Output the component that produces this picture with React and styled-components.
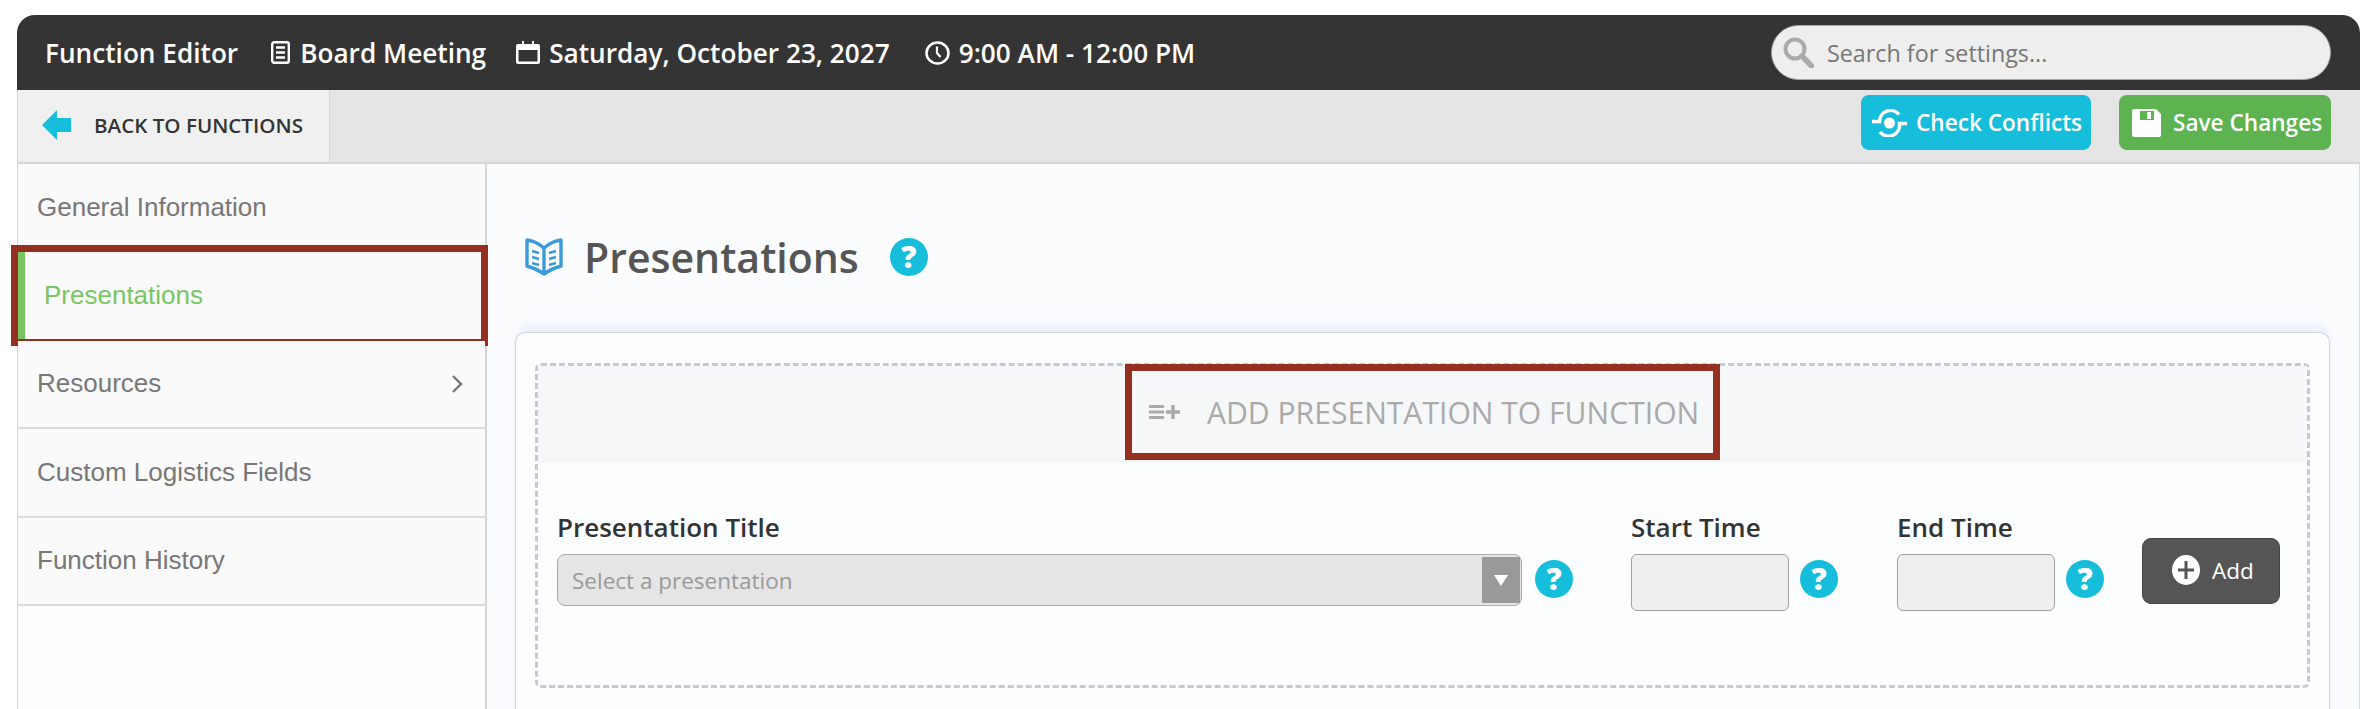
import React from 'react'
import styled, { createGlobalStyle } from 'styled-components'

const GlobalStyle = createGlobalStyle`
    html, body {
        margin: 0;
        height: 709px;
        overflow: hidden;
        background: #fff;
    }
    * { box-sizing: border-box; }
`

const Shell = styled.div`
    width: 2343px;
    height: 694px;
    margin: 15px 0 0 17px;
    font-family: "Open Sans", sans-serif;
`

// HEADER
const Header = styled.header`
    display: flex;
    align-items: center;
    height: 75px;
    padding: 0 29px 0 28px;
    background: #343434;
    border-radius: 18px 18px 0 0;
`
const HeaderItem = styled.div`
    display: flex;
    align-items: center;
    gap: ${p => p.$gap || 9}px;
    margin-right: ${p => p.$space || 0}px;
    color: #fff;
    font-size: 26.2px;
    font-weight: 600;
    white-space: nowrap;
`
const Search = styled.div`
    display: flex;
    align-items: center;
    gap: 13px;
    width: 560px;
    height: 55px;
    margin-left: auto;
    padding-left: 11px;
    background: #eee;
    border: 1px solid #a5a5a5;
    border-radius: 28px;
    color: #777;
    font-size: 23.3px;
`

// TOOLBAR
const Toolbar = styled.div`
    display: flex;
    align-items: stretch;
    height: 74px;
    padding-right: 29px;
    background: #e5e5e5;
    border-bottom: 2px solid #d6d6d6;
`
const BackLink = styled.div`
    display: flex;
    align-items: center;
    gap: 23px;
    width: 313px;
    padding: 0 0 2px 24px;
    background: #f0f0f0;
    border-left: 1px solid #d6d6d6;
    border-right: 1px solid #d6d6d6;
    color: #333;
    font-size: 20.6px;
    font-weight: 600;
`
const Actions = styled.div`
    display: flex;
    gap: 28px;
    margin-left: auto;
    padding-top: 5px;
`
const ActionButton = styled.div`
    display: flex;
    align-items: center;
    gap: ${p => p.$gap}px;
    width: ${p => p.$width}px;
    height: 55px;
    padding-left: ${p => p.$pad}px;
    background: ${p => p.$color};
    border-radius: 8px;
    color: #fff;
    font-size: 22.6px;
    font-weight: 600;
    white-space: nowrap;
`

// BODY
const Body = styled.div`
    display: flex;
    height: 545px;
`
const Sidebar = styled.nav`
    width: 470px;
    flex: none;
    background: #fcfdfe;
    border-left: 1px solid #d6d6d6;
    border-right: 2px solid #d6d6d6;
`
const NavItem = styled.div`
    position: relative;
    display: flex;
    align-items: center;
    justify-content: space-between;
    height: 88.4px;
    padding: 0 22px 0 19px;
    background: #fafafa;
    border-bottom: 2px solid #dcdcdc;
    border-left: ${p => p.$active ? '7px solid #77c663' : 'none'};
    color: ${p => p.$active ? '#77c663' : '#777'};
    font-family: "Liberation Sans", Arial, sans-serif;
    font-size: 26px;

    ${p => p.$active && `
        &::after {
            content: '';
            position: absolute;
            top: -7px;
            left: -14px;
            right: -3px;
            bottom: -7px;
            border: 7px solid #93301f;
        }
    `}
`
const Main = styled.main`
    flex: 1;
    padding: 74px 29px 0 28px;
    background: #fbfcfe;
    border-right: 1px solid #d6d9de;
`
const TitleRow = styled.div`
    display: flex;
    align-items: center;
    height: 38px;
    margin: 0 0 56px 10px;
`
const Title = styled.h1`
    margin: 0 31px 0 21px;
    color: #555;
    font-size: 41px;
    font-weight: 600;
    line-height: 38px;
`
const Help = styled.span`
    display: inline-flex;
    align-items: center;
    justify-content: center;
    flex: none;
    width: 38px;
    height: 38px;
    margin-top: ${p => p.$top || 0}px;
    border-radius: 50%;
    background: #17bedb;
    color: #fff;
    font-size: 30px;
    font-weight: 800;
    line-height: 1;
`
const Card = styled.section`
    position: relative;
    height: 400px;
    padding: 30px 19px 0;
    background: #fcfdff;
    border: 1px solid #cfd3d9;
    border-bottom: none;
    border-radius: 10px 10px 0 0;
    box-shadow: 0 -8px 12px -4px rgba(190, 215, 245, .45);
`
const DashedBox = styled.div`
    height: 325px;
    border: 3px dashed #c5c9d6;
    border-radius: 6px;
`
const Band = styled.div`
    display: flex;
    justify-content: center;
    height: 97px;
    background: #f6f7f8;
`
const BandTitle = styled.div`
    position: relative;
    display: flex;
    align-items: center;
    gap: 27px;
    width: 595px;
    height: 96px;
    margin-top: -2px;
    padding-left: 17px;
    border: 7px solid #93301f;
    color: #aaa;
    font-size: 30.1px;
    white-space: nowrap;
`
const FormRow = styled.div`
    display: flex;
    padding: 49px 0 0 19px;
`
const Field = styled.div`
    margin-right: ${p => p.$space}px;
`
const Label = styled.label`
    display: block;
    height: 30px;
    margin-bottom: 12px;
    color: #333;
    font-size: 26px;
    font-weight: 600;
    line-height: 30px;
`
const Controls = styled.div`
    display: flex;
    gap: ${p => p.$gap}px;
`
const Select = styled.div`
    display: flex;
    align-items: center;
    justify-content: space-between;
    width: 965px;
    height: 52px;
    padding: 2px 1px 2px 14px;
    background: #e5e5e5;
    border: 1px solid #aaa;
    border-radius: 8px;
    color: #999;
    font-size: 22.5px;
`
const SelectArrow = styled.span`
    display: flex;
    align-items: center;
    justify-content: center;
    align-self: stretch;
    width: 38px;
    background: #999;

    &::before {
        content: '';
        border-left: 7px solid transparent;
        border-right: 7px solid transparent;
        border-top: 11px solid #fff;
    }
`
const TimeInput = styled.div`
    width: 158px;
    height: 57px;
    background: #efefef;
    border: 1px solid #a0a0a0;
    border-radius: 6px;
`
const AddButton = styled.div`
    display: flex;
    align-items: center;
    gap: 12px;
    width: 138px;
    height: 66px;
    margin-top: 26px;
    padding: 0 0 2px 29px;
    background: #555;
    border: 1px solid #444;
    border-radius: 9px;
    color: #fff;
    font-size: 22.5px;
`

// ICONS
const DocIcon = () => (
    <svg width="19" height="23" viewBox="0 0 19 23">
        <rect x="1.2" y="1.2" width="16.6" height="20.6" rx="2" fill="none" stroke="#fff" strokeWidth="2.4" />
        <path d="M5 6.5h9M5 11.5h9M5 16.5h9" stroke="#fff" strokeWidth="2.4" />
    </svg>
)
const CalendarIcon = () => (
    <svg width="24" height="23" viewBox="0 0 24 23">
        <path d="M2 3h20a2 2 0 0 1 2 2v16a2 2 0 0 1-2 2H2a2 2 0 0 1-2-2V5a2 2 0 0 1 2-2zM2.500 9v11.500h19V9z" fill="#fff" fillRule="evenodd" />
        <path d="M6 0h2v4H6zM16 0h2v4h-2z" fill="#fff" />
    </svg>
)
const ClockIcon = () => (
    <svg width="25" height="24" viewBox="0 0 25 24">
        <ellipse cx="12.500" cy="12" rx="11" ry="10.500" fill="none" stroke="#fff" strokeWidth="2.500" />
        <path d="M12 5.500V12l3.500 4" fill="none" stroke="#fff" strokeWidth="2.200" />
    </svg>
)
const SearchIcon = () => (
    <svg width="31" height="31" viewBox="0 0 31 31">
        <circle cx="12" cy="12" r="9.500" fill="none" stroke="#aaa" strokeWidth="4" />
        <path d="M19 19l9.500 10" stroke="#aaa" strokeWidth="5.500" strokeLinecap="round" />
    </svg>
)
const BackArrow = () => (
    <svg width="29" height="30" viewBox="0 0 29 30">
        <path d="M0 15L15 0v8h14v14H15v8z" fill="#17bedb" />
    </svg>
)
const ConflictIcon = () => (
    <svg width="35" height="28" viewBox="0 0 35 28">
        <circle cx="17.500" cy="14" r="5.500" fill="#fff" />
        <path d="M0 12.500h7.500A11 11 0 0 1 27 5.500" fill="none" stroke="#fff" strokeWidth="3.500" />
        <path d="M35 14.500h-7.500A11 11 0 0 1 8 23" fill="none" stroke="#fff" strokeWidth="3.500" />
    </svg>
)
const SaveIcon = () => (
    <svg width="29" height="28" viewBox="0 0 29 28">
        <path d="M2 0h22l5 5v21a2 2 0 0 1-2 2H2a2 2 0 0 1-2-2V2a2 2 0 0 1 2-2z" fill="#fff" />
        <rect x="8" y="2" width="14" height="9" fill="#5cb350" />
        <rect x="15" y="3" width="4" height="7" fill="#fff" />
    </svg>
)
const BookIcon = () => (
    <svg width="38" height="38" viewBox="0 0 38 38">
        <path d="M19 10Q11 3 2 2v26q10 3 17 8 7-5 17-8V2q-9 1-17 8zM19 10v26" fill="none" stroke="#3b9bd9" strokeWidth="3.400" strokeLinejoin="round" />
        <path d="M7 13l7 2M7 19l7 2M7 25l7 2M31 13l-7 2M31 19l-7 2M31 25l-7 2" stroke="#3b9bd9" strokeWidth="2.500" />
    </svg>
)
const ListPlusIcon = () => (
    <svg width="31" height="16" viewBox="0 0 31 16">
        <path d="M0 2.500h14M0 8h14M0 13.500h14" stroke="#aaa" strokeWidth="3" strokeLinecap="round" />
        <path d="M24 1v14M17 8h14" stroke="#aaa" strokeWidth="3.500" />
    </svg>
)
const PlusCircle = () => (
    <svg width="28" height="30" viewBox="0 0 28 30">
        <ellipse cx="14" cy="15" rx="14" ry="15" fill="#fff" />
        <path d="M14 6v18M6 15h16" stroke="#555" strokeWidth="3" />
    </svg>
)
const Chevron = () => (
    <svg width="12" height="20" viewBox="0 0 12 20">
        <path d="M2 2l8 8-8 8" fill="none" stroke="#777" strokeWidth="2.400" />
    </svg>
)

const navItems = ['General Information', 'Presentations', 'Resources', 'Custom Logistics Fields', 'Function History']

const App = () => (
    <>
        <GlobalStyle />
        <Shell>
            <Header>
                <HeaderItem $space={33}>Function Editor</HeaderItem>
                <HeaderItem $space={30} $gap={10}><DocIcon />Board Meeting</HeaderItem>
                <HeaderItem $space={35}><CalendarIcon />Saturday, October 23, 2027</HeaderItem>
                <HeaderItem><ClockIcon />9:00 AM - 12:00 PM</HeaderItem>
                <Search><SearchIcon />Search for settings...</Search>
            </Header>
            <Toolbar>
                <BackLink><BackArrow />BACK TO FUNCTIONS</BackLink>
                <Actions>
                    <ActionButton $color="#17bedb" $width={230} $pad={11} $gap={9}><ConflictIcon />Check Conflicts</ActionButton>
                    <ActionButton $color="#5cb350" $width={212} $pad={13} $gap={12}><SaveIcon />Save Changes</ActionButton>
                </Actions>
            </Toolbar>
            <Body>
                <Sidebar>
                    {navItems.map(item => (
                        <NavItem key={item} $active={item === 'Presentations'}>
                            {item}
                            {item === 'Resources' && <Chevron />}
                        </NavItem>
                    ))}
                </Sidebar>
                <Main>
                    <TitleRow>
                        <BookIcon />
                        <Title>Presentations</Title>
                        <Help>?</Help>
                    </TitleRow>
                    <Card>
                        <DashedBox>
                            <Band>
                                <BandTitle><ListPlusIcon />ADD PRESENTATION TO FUNCTION</BandTitle>
                            </Band>
                            <FormRow>
                                <Field $space={58}>
                                    <Label>Presentation Title</Label>
                                    <Controls $gap={13}>
                                        <Select>Select a presentation<SelectArrow /></Select>
                                        <Help $top={6}>?</Help>
                                    </Controls>
                                </Field>
                                <Field $space={59}>
                                    <Label>Start Time</Label>
                                    <Controls $gap={11}>
                                        <TimeInput />
                                        <Help $top={6}>?</Help>
                                    </Controls>
                                </Field>
                                <Field $space={38}>
                                    <Label>End Time</Label>
                                    <Controls $gap={11}>
                                        <TimeInput />
                                        <Help $top={6}>?</Help>
                                    </Controls>
                                </Field>
                                <AddButton><PlusCircle />Add</AddButton>
                            </FormRow>
                        </DashedBox>
                    </Card>
                </Main>
            </Body>
        </Shell>
    </>
)

export default App
